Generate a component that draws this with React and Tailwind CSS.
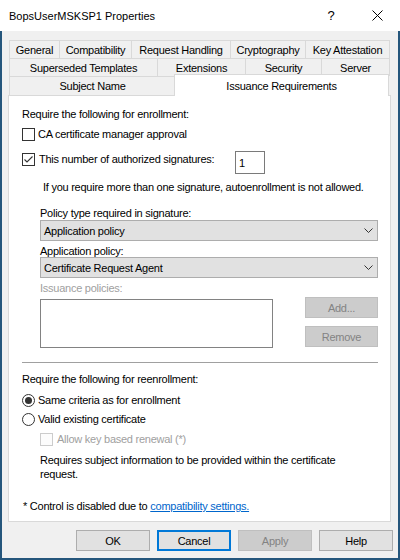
import React from 'react';

const row1 = [
  ['General', 'w-[51px] border-l'],
  ['Compatibility', 'w-[72px]'],
  ['Request Handling', 'w-[99px]'],
  ['Cryptography', 'w-[75px]'],
  ['Key Attestation', 'w-[84px]'],
];

const row2 = [
  ['Superseded Templates', 'w-[149px] border-l'],
  ['Extensions', 'w-[88px]'],
  ['Security', 'w-[76px]'],
  ['Server', 'w-[68px]'],
];

const Tab = ({ label, className }) => (
  <div className={`h-full flex items-center justify-center border-t border-r border-[#d9d9d9] bg-[#f0f0f0] ${className}`}>
    {label}
  </div>
);

const CheckBox = ({ checked, disabled }) => (
  <span
    className={`w-[13px] h-[13px] shrink-0 border flex items-center justify-center ${
      disabled ? 'border-[#cccccc] bg-[#fcfcfc]' : 'border-[#333333] bg-white'
    }`}
  >
    {checked && (
      <svg width="11" height="11" viewBox="0 0 11 11">
        <polyline points="1.5,5.5 4,8 9.5,2.5" fill="none" stroke="#333333" strokeWidth="1.1" />
      </svg>
    )}
  </span>
);

const Radio = ({ checked }) => (
  <span className="w-[13px] h-[13px] shrink-0 rounded-full border border-[#333333] bg-white flex items-center justify-center">
    {checked && <span className="w-[7px] h-[7px] rounded-full bg-[#333333]" />}
  </span>
);

const Chevron = () => (
  <svg width="9" height="5" viewBox="0 0 9 5">
    <polyline points="0.5,0.5 4.5,4.5 8.5,0.5" fill="none" stroke="#333333" strokeWidth="1" />
  </svg>
);

const Select = ({ value }) => (
  <div className="h-[21px] w-[338px] border border-[#adadad] bg-[#e1e1e1] flex items-center pl-[3px] pr-[4px]">
    <span className="flex-1">{value}</span>
    <Chevron />
  </div>
);

const Button = ({ children, variant, width = 'w-[75px]' }) => {
  const styles = {
    normal: 'border border-[#adadad] bg-[#e1e1e1] text-black',
    primary: 'border-2 border-[#0078d7] bg-[#e1e1e1] text-black',
    disabled: 'border border-[#bfbfbf] bg-[#cccccc] text-[#838383]',
  };
  return (
    <div className={`${width} h-[21px] flex items-center justify-center ${styles[variant]}`}>
      {children}
    </div>
  );
};

export default function App() {
  return (
    <div className="w-[400px] h-[560px] flex flex-col text-[11px] leading-[14px] text-black font-['Liberation_Sans',Arial,sans-serif]">
      {/* Title bar */}
      <div className="h-[31px] shrink-0 bg-white flex items-center pl-[9px]">
        <span className="flex-1 text-[11px]">BopsUserMSKSP1 Properties</span>
        <div className="w-[46px] h-full flex items-center justify-center text-[13px]">?</div>
        <div className="w-[46px] h-full flex items-center justify-center">
          <svg width="11" height="11" viewBox="0 0 11 11">
            <path d="M0.5 0.5 L10.5 10.5 M10.5 0.5 L0.5 10.5" stroke="#000" strokeWidth="1" />
          </svg>
        </div>
      </div>

      {/* Dialog body */}
      <div className="flex-1 bg-[#f0f0f0] border-x-2 border-b-2 border-[#25567c] flex flex-col tracking-[-0.25px]">
        {/* Tab strip */}
        <div className="mt-[9px] pl-[7px] flex flex-col">
          <div className="h-[18px] flex">
            {row1.map(([label, cls]) => (
              <Tab key={label} label={label} className={cls} />
            ))}
          </div>
          <div className="h-[18px] flex">
            {row2.map(([label, cls]) => (
              <Tab key={label} label={label} className={cls} />
            ))}
          </div>
          <div className="h-[19px] flex items-end">
            <Tab label="Subject Name" className="w-[167px] border-l" />
            <div className="relative z-10 -ml-[2px] mb-[-1px] w-[215px] h-[22px] bg-white border-t border-x border-[#d9d9d9] flex items-center justify-center">
              Issuance Requirements
            </div>
          </div>
        </div>

        {/* Tab page */}
        <div className="ml-[6px] mr-[7px] h-[427px] bg-white border border-[#d9d9d9] flex flex-col pl-[13px] pr-[12px]">
          <div className="mt-[11px]">Require the following for enrollment:</div>

          <div className="mt-[6px] h-[14px] flex items-center gap-[3px]">
            <CheckBox />
            <span>CA certificate manager approval</span>
          </div>

          <div className="mt-[10px] flex items-start">
            <div className="w-[213px] mt-px h-[14px] flex items-center gap-[4px]">
              <CheckBox checked />
              <span>This number of authorized signatures:</span>
            </div>
            <div className="w-[30px] h-[23px] border border-[#7a7a7a] bg-white pl-[3px] pt-[4px]">1</div>
          </div>

          <div className="mt-[6px] ml-[21px]">
            If you require more than one signature, autoenrollment is not allowed.
          </div>

          <div className="ml-[18px] flex flex-col">
            <div className="mt-[12px]">Policy type required in signature:</div>
            <Select value="Application policy" />
            <div className="mt-[4px] leading-[12px]">Application policy:</div>
            <Select value="Certificate Request Agent" />
            <div className="mt-[3px] text-[#a0a0a0]">Issuance policies:</div>
            <div className="mt-[2px] flex items-start">
              <div className="mt-[2px] w-[233px] h-[49px] border border-[#828282] bg-white" />
              <div className="ml-auto flex flex-col gap-[8px]">
                <Button variant="disabled" width="w-[73px]">Add...</Button>
                <Button variant="disabled" width="w-[73px]">Remove</Button>
              </div>
            </div>
          </div>

          <div className="mt-[14px] h-px bg-[#a0a0a0]" />

          <div className="mt-[9px]">Require the following for reenrollment:</div>

          <div className="mt-[7px] h-[14px] flex items-center gap-[3px]">
            <Radio checked />
            <span>Same criteria as for enrollment</span>
          </div>
          <div className="mt-[5px] h-[14px] flex items-center gap-[3px]">
            <Radio />
            <span>Valid existing certificate</span>
          </div>
          <div className="mt-[6px] ml-[18px] h-[14px] flex items-center gap-[4px] text-[#a0a0a0]">
            <CheckBox disabled />
            <span>Allow key based renewal (*)</span>
          </div>

          <div className="mt-[7px] ml-[18px] flex flex-col">
            <span>Requires subject information to be provided within the certificate</span>
            <span>request.</span>
          </div>

          <div className="mt-[18px] ml-px">
            * Control is disabled due to{' '}
            <span className="text-[#0066cc] underline">compatibility settings.</span>
          </div>
        </div>

        {/* Dialog buttons */}
        <div className="mt-[8px] pr-[5px] flex justify-end gap-[7px]">
          <Button variant="normal" width="w-[74px]">OK</Button>
          <Button variant="primary" width="w-[74px]">Cancel</Button>
          <Button variant="disabled" width="w-[74px]">Apply</Button>
          <Button variant="normal" width="w-[74px]">Help</Button>
        </div>
      </div>
    </div>
  );
}
